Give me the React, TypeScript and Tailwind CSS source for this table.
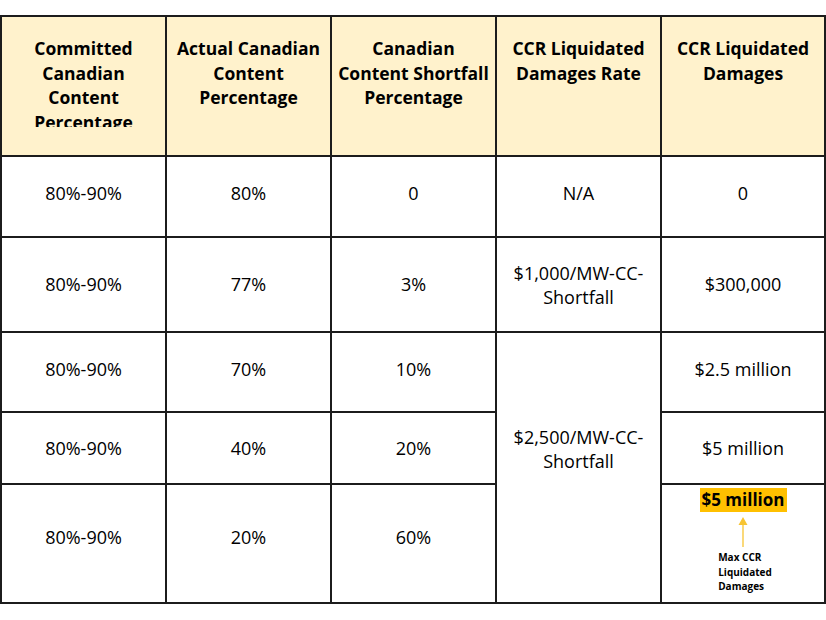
import React from 'react';

const headers: React.ReactNode[] = [
  <>Committed<br />Canadian<br />Content<br />Percentage</>,
  <>Actual Canadian<br />Content<br />Percentage</>,
  <>Canadian<br />Content Shortfall<br />Percentage</>,
  <>CCR Liquidated<br />Damages Rate</>,
  <>CCR Liquidated<br />Damages</>,
];

const Cell = ({ children, className = '' }: { children?: React.ReactNode; className?: string }) => (
  <div className={`border-r-2 border-b-2 border-[#1c1c1c] flex items-center justify-center text-center ${className}`}>
    {children}
  </div>
);

const MaxCell = () => (
  <div className="border-r-2 border-b-2 border-[#1c1c1c] flex flex-col items-center pt-[3px]">
    <span className="bg-[#ffc000] px-[2px] text-[17px] leading-[24px] font-bold">$5 million</span>
    <svg width="10" height="30" viewBox="0 0 10 30" className="mt-[5px]">
      <path d="M5 0 L9.5 8 L0.5 8 Z" fill="#f7c432" />
      <line x1="5" y1="7" x2="5" y2="30" stroke="#f7c432" strokeWidth="1.3" />
    </svg>
    <div className="text-left text-[10px] leading-[14.5px] font-bold mt-[3px] pl-[4px]">
      Max CCR<br />Liquidated<br />Damages
    </div>
  </div>
);

export default function App() {
  return (
    <div className="w-[826px] h-[620px] bg-white font-['Open_Sans',sans-serif] text-[18px] text-black">
      <div className="mt-[15px] grid grid-cols-[165px_165px_165px_165px_164px] grid-rows-[140px_81px_95px_80px_72px_119px] border-t-2 border-l-2 border-[#1c1c1c]">
        {headers.map((h, i) => (
          <div key={i} className="border-r-2 border-b-2 border-[#1c1c1c] bg-[#fff2cc] pt-[19px] px-1">
            <div className="h-[91px] overflow-hidden text-center text-[17.5px] font-bold leading-[24.5px]">{h}</div>
          </div>
        ))}

        <Cell className="pb-[6px]">80%-90%</Cell>
        <Cell className="pb-[6px]">80%</Cell>
        <Cell className="pb-[6px]">0</Cell>
        <Cell className="pb-[6px]">N/A</Cell>
        <Cell className="pb-[6px]">0</Cell>

        <Cell>80%-90%</Cell>
        <Cell>77%</Cell>
        <Cell>3%</Cell>
        <Cell className="leading-[24px]">$1,000/MW-CC-<br />Shortfall</Cell>
        <Cell>$300,000</Cell>

        <Cell className="pb-[6px]">80%-90%</Cell>
        <Cell className="pb-[6px]">70%</Cell>
        <Cell className="pb-[6px]">10%</Cell>
        <Cell className="row-span-3 pb-[38px] leading-[24px]">$2,500/MW-CC-<br />Shortfall</Cell>
        <Cell className="pb-[6px]">$2.5 million</Cell>

        <Cell>80%-90%</Cell>
        <Cell>40%</Cell>
        <Cell>20%</Cell>
        <Cell>$5 million</Cell>

        <Cell className="pb-[12px]">80%-90%</Cell>
        <Cell className="pb-[12px]">20%</Cell>
        <Cell className="pb-[12px]">60%</Cell>
        <MaxCell />
      </div>
    </div>
  );
}
